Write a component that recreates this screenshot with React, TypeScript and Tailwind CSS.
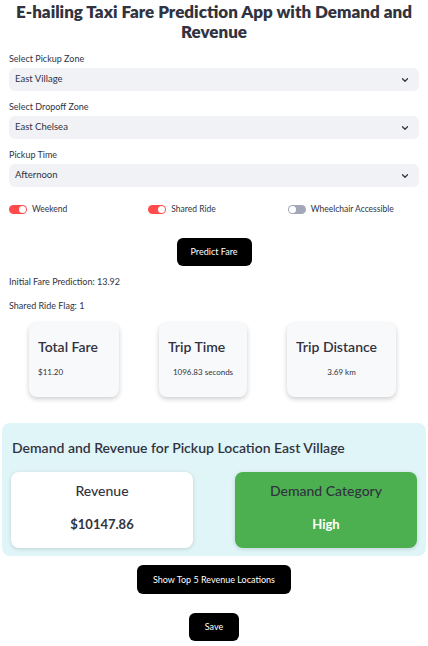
import { ChevronDown } from "lucide-react";

function Select({ label, value }: { label: string; value: string }) {
  return (
    <div className="mb-[9px]">
      <p className="text-[9px] text-[#31333F] leading-[14px] mb-[2px]">{label}</p>
      <div className="flex items-center justify-between h-[23px] rounded-md bg-[#F0F2F6] pl-[6px] pr-[9px]">
        <span className="text-[9.5px] text-[#31333F]">{value}</span>
        <ChevronDown size={10} strokeWidth={3} className="text-[#31333F]" />
      </div>
    </div>
  );
}

function Toggle({ on, label }: { on: boolean; label: string }) {
  return (
    <div className="flex items-center gap-[5px] h-[14px]">
      <div
        className={`flex items-center w-[18px] h-[9px] rounded-full px-[1px] ${
          on ? "bg-[#FF4B4B] justify-end" : "bg-[#A3A8B8] justify-start"
        }`}
      >
        <div className="w-[7px] h-[7px] rounded-full bg-white" />
      </div>
      <span className="text-[8.5px] text-[#31333F]">{label}</span>
    </div>
  );
}

const card = "h-[74px] rounded-lg bg-[#F8F9FA] shadow-[0_2px_5px_rgba(0,0,0,0.2)] pt-[14px]";

export default function App() {
  return (
    <div
      className="w-[428px] h-[646px] bg-white text-[#31333F] overflow-hidden"
      style={{ fontFamily: "Lato, 'Open Sans', sans-serif" }}
    >
      <div className="px-[9px]">
        <h1 className="text-center font-extrabold text-[17px] leading-[20px] pt-[2px] mb-[10px] -mx-[4px]">
          E-hailing Taxi Fare Prediction App with Demand and Revenue
        </h1>

        <Select label="Select Pickup Zone" value="East Village" />
        <Select label="Select Dropoff Zone" value="East Chelsea" />
        <Select label="Pickup Time" value="Afternoon" />

        <div className="grid grid-cols-3 gap-2 mt-[15px]">
          <Toggle on label="Weekend" />
          <Toggle on label="Shared Ride" />
          <Toggle on={false} label="Wheelchair Accessible" />
        </div>

        <div className="flex justify-center mt-[22px]">
          <button className="w-[75px] h-[28px] bg-black text-white text-[9px] rounded-md">
            Predict Fare
          </button>
        </div>

        <p className="text-[9px] mt-[9px] leading-[14px]">Initial Fare Prediction: 13.92</p>
        <p className="text-[9px] mt-[10px] leading-[14px]">Shared Ride Flag: 1</p>
      </div>

      <div className="flex gap-[40px] pl-[29px] mt-[10px]">
        <div className={`${card} w-[90px] pl-[9px]`}>
          <p className="text-[14px] font-semibold leading-[20px]">Total Fare</p>
          <p className="text-[8px] leading-[14px] mt-[8px]">$11.20</p>
        </div>
        <div className={`${card} w-[88px] px-[9px]`}>
          <p className="text-[14px] font-semibold leading-[20px]">Trip Time</p>
          <p className="text-[8px] leading-[14px] mt-[8px] text-center whitespace-nowrap">1096.83 seconds</p>
        </div>
        <div className={`${card} w-[109px] px-[9px]`}>
          <p className="text-[14px] font-semibold leading-[20px] whitespace-nowrap">Trip Distance</p>
          <p className="text-[8px] leading-[14px] mt-[8px] text-center">3.69 km</p>
        </div>
      </div>

      <div className="mx-[2px] mt-[26px] rounded-lg bg-[#E0F5F8] px-[9px] pt-[15px] pb-[8px]">
        <h2 className="text-[14px] font-semibold leading-[20px] ml-[1px]">
          Demand and Revenue for Pickup Location East Village
        </h2>
        <div className="flex justify-between mt-[14px]">
          <div className="w-[182px] h-[76px] rounded-lg bg-white shadow-[0_1px_4px_rgba(0,0,0,0.15)] flex flex-col items-center pt-[9px]">
            <p className="text-[14px] font-medium leading-[20px]">Revenue</p>
            <p className="text-[13px] font-bold leading-[20px] mt-[13px]">$10147.86</p>
          </div>
          <div className="w-[182px] h-[76px] rounded-lg bg-[#4CAF50] shadow-[0_1px_4px_rgba(0,0,0,0.15)] flex flex-col items-center pt-[9px]">
            <p className="text-[14px] font-medium leading-[20px]">Demand Category</p>
            <p className="text-[13px] font-bold leading-[20px] text-white mt-[13px]">High</p>
          </div>
        </div>
      </div>

      <div className="flex justify-center mt-[9px]">
        <button className="w-[154px] h-[29px] bg-black text-white text-[9px] rounded-md">
          Show Top 5 Revenue Locations
        </button>
      </div>
      <div className="flex justify-center mt-[19px]">
        <button className="w-[50px] h-[28px] bg-black text-white text-[9px] rounded-md">
          Save
        </button>
      </div>
    </div>
  );
}
